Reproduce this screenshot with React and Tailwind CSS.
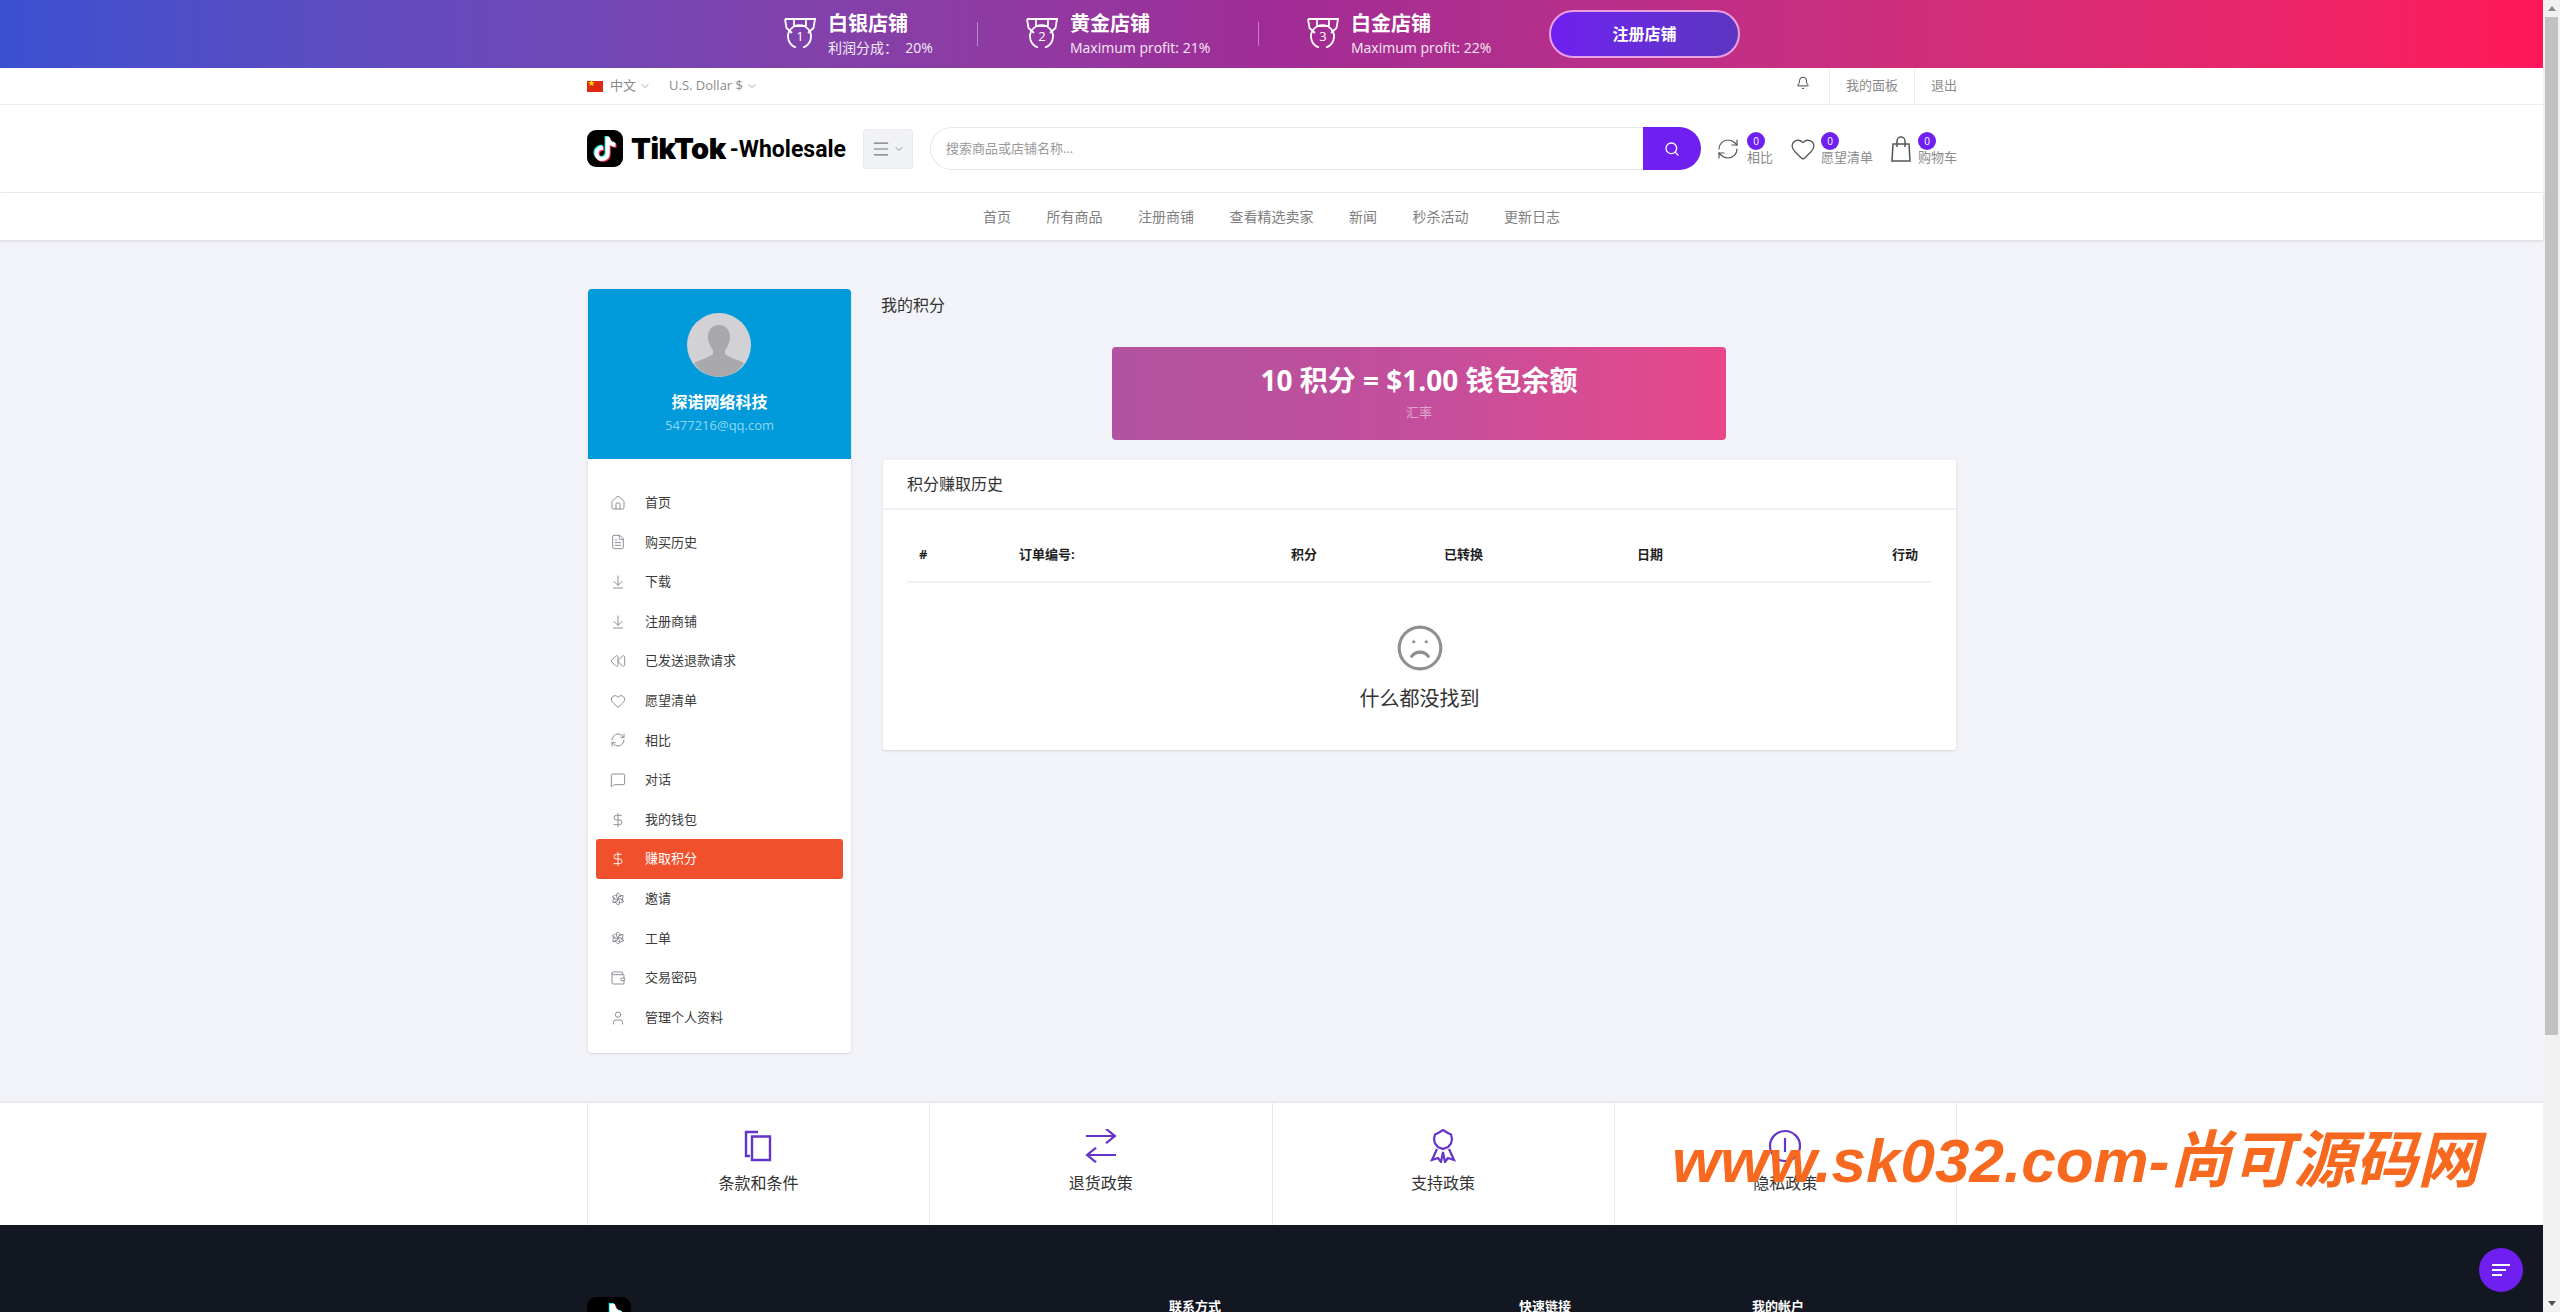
import { House, FileText, ArrowDownToLine, Rewind, Heart, RefreshCw, MessageSquare, DollarSign, Wallet, User, Bell, Search, Menu, ChevronDown, Frown } from 'lucide-react'
import { FaTiktok } from 'react-icons/fa6'

const FONT = 'font-["Open_Sans","Noto_Sans_CJK_SC",sans-serif]'

// ── Pinwheel icon (sidebar) ───────────────────────────────────────────────────
function Pinwheel({ className }) {
  return (
    <svg className={className} viewBox="0 0 24 24" fill="none" stroke="currentColor" strokeWidth={1.4}>
      {[0, 60, 120, 180, 240, 300].map((r) => (
        <path key={r} transform={`rotate(${r} 12 12)`} d="M12 12c-3-2-3-6-1-9 3 1 5 3 5 6" />
      ))}
    </svg>
  )
}

// ── Medal (top banner) ────────────────────────────────────────────────────────
function Medal({ n }) {
  return (
    <svg className="w-8 h-8 shrink-0" viewBox="0 0 32 32" fill="none" stroke="#fff" strokeWidth={1.8}>
      <path d="M1 1h30l-1.5 9-5.5 5M1 1l1.5 9 5.5 5M10 1v7M22 1v7M10 8h12" />
      <path d="M19 30.5a11.5 11.5 0 1 0-7 0" transform="translate(0 -1)" />
      <text x="16" y="23" textAnchor="middle" fontSize="13" fill="#fff" stroke="none" fontFamily="Open Sans">{n}</text>
    </svg>
  )
}

function Tier({ n, title, sub, subWidth }) {
  return (
    <div className="flex items-center gap-3 text-white">
      <Medal n={n} />
      <div className={subWidth}>
        <div className="text-[20px] leading-[26px] font-bold">{title}</div>
        <div className="text-[14px] leading-[20px] mt-[1px] text-white/90 whitespace-pre">{sub}</div>
      </div>
    </div>
  )
}

// ── TikTok logo ───────────────────────────────────────────────────────────────
function LogoMark({ size = 'w-9 h-[37px]', icon = 'text-[24px]' }) {
  return (
    <div className={`relative shrink-0 ${size} bg-black rounded-[9px] flex items-center justify-center ${icon}`}>
      <FaTiktok className="absolute text-[#25f4ee] -translate-x-[1px] -translate-y-[1px]" />
      <FaTiktok className="absolute text-[#fe2c55] translate-x-[1px] translate-y-[1px]" />
      <FaTiktok className="absolute text-white" />
    </div>
  )
}

function HeaderIcon({ icon, label, boxWidth }) {
  return (
    <div className="flex items-center whitespace-nowrap">
      <div className={`shrink-0 ${boxWidth}`}>{icon}</div>
      <div className="flex flex-col items-start">
        <span className="w-[18px] h-[18px] rounded-full bg-[#6f1ff0] text-white text-[10px] flex items-center justify-center">0</span>
        <span className="text-[13px] leading-[16px] text-[#8a8a8a] -mt-[1px]">{label}</span>
      </div>
    </div>
  )
}

const menu = [
  [House, '首页'],
  [FileText, '购买历史'],
  [ArrowDownToLine, '下载'],
  [ArrowDownToLine, '注册商铺'],
  [Rewind, '已发送退款请求'],
  [Heart, '愿望清单'],
  [RefreshCw, '相比'],
  [MessageSquare, '对话'],
  [DollarSign, '我的钱包'],
  [DollarSign, '赚取积分', true],
  [Pinwheel, '邀请'],
  [Pinwheel, '工单'],
  [Wallet, '交易密码'],
  [User, '管理个人资料'],
]

function Sidebar() {
  return (
    <aside className="w-[263px] shrink-0 rounded-[4px] bg-white shadow-sm overflow-hidden">
      <div className="h-[170px] bg-[#019bdb] flex flex-col items-center pt-[24px]">
        <svg className="w-16 h-16 rounded-full -ml-[2px]" viewBox="0 0 64 64">
          <rect width="64" height="64" fill="#d2d2d4" />
          <path d="M32 12c7 0 11 5 11 12 0 3-.5 5-1.500 7-1 3-2.500 5-3.500 6v4c3 3 11 5 19 9-5 8-14 14-25 14S12 58 7 50c8-4 16-6 19-9v-4c-1-1-2.500-3-3.500-6-1-2-1.500-4-1.500-7 0-7 4-12 11-12z" fill="#a9a9ac" />
        </svg>
        <div className="mt-[13px] text-[16px] leading-[24px] font-bold text-white">探诺网络科技</div>
        <div className="text-[13px] leading-[20px] mt-[1px] text-[#8fd6f3]">5477216@qq.com</div>
      </div>
      <div className="pt-[24px] pb-[16px] px-2">
        {menu.map(([Icon, label, active]) => (
          <div key={label} className={`h-[39.6px] flex items-center pl-[14px] rounded-[3px] text-[13px] ${active ? 'bg-[#f1502c] text-white' : 'text-[#3a3a3a]'}`}>
            <Icon className={`w-4 h-4 ${active ? 'text-white' : 'text-[#85858f]'}`} strokeWidth={1.4} />
            <span className="ml-[19px]">{label}</span>
          </div>
        ))}
      </div>
    </aside>
  )
}

function Content() {
  return (
    <section className="flex-1 ml-[32px] min-w-0">
      <h1 className="-ml-[2px] mt-[4px] text-[16px] leading-[24px] text-[#333]">我的积分</h1>
      <div className="mt-[30px] ml-[229px] w-[614px] h-[93px] rounded-[4px] bg-gradient-to-r from-[#b2539f] via-[#c34e9c] to-[#e8478a] flex flex-col items-center text-white">
        <div className="mt-[15px] text-[28px] leading-[36px] font-bold">10 积分 = $1.00 钱包余额</div>
        <div className="mt-[4px] text-[13px] leading-[20px] text-white/50">汇率</div>
      </div>
      <div className="mt-[20px] bg-white rounded-[2px] shadow-sm h-[290px]">
        <div className="h-[50px] border-b-2 border-[#eff0f4] px-6 flex items-center text-[16px] text-[#333]">积分赚取历史</div>
        <div className="px-6">
          <div className="h-[73px] pt-[18px] border-b-2 border-[#f1f1f5] grid grid-cols-[100px_272px_153px_193px_1fr_1fr] items-center pl-[12px] pr-[14px] text-[13px] font-bold text-[#1f1f1f]">
            <span>#</span>
            <span>订单编号:</span>
            <span>积分</span>
            <span>已转换</span>
            <span>日期</span>
            <span className="text-right">行动</span>
          </div>
          <div className="flex flex-col items-center pt-[40px]">
            <Frown className="w-[50px] h-[50px] text-[#8f8f8f]" strokeWidth={1.5} />
            <div className="mt-[12px] text-[20px] leading-[28px] text-[#333]">什么都没找到</div>
          </div>
        </div>
      </div>
    </section>
  )
}

function Policy({ icon, label, last }) {
  return (
    <div className={`flex-1 flex flex-col items-center pt-[26px] border-l border-[#e8e8ec] ${last ? 'border-r' : ''}`}>
      {icon}
      <div className="mt-[8px] text-[16px] leading-[24px] text-[#333]">{label}</div>
    </div>
  )
}

const policyIcon = 'w-[34px] h-[34px] text-[#6534c9]'

function Scrollbar() {
  return (
    <div className="w-[17px] shrink-0 bg-[#f1f1f1] flex flex-col items-center">
      <div className="h-[17px] flex items-center justify-center">
        <div className="w-0 h-0 border-x-[4px] border-x-transparent border-b-[5px] border-b-[#8a8a8a]" />
      </div>
      <div className="w-[13px] h-[1018px] bg-[#c1c1c1]" />
      <div className="mt-auto h-[17px] flex items-center justify-center">
        <div className="w-0 h-0 border-x-[4px] border-x-transparent border-t-[5px] border-t-[#505050]" />
      </div>
    </div>
  )
}

export default function App() {
  return (
    <div className={`h-[1312px] overflow-hidden flex ${FONT}`}>
      <div className="flex-1 min-w-0 relative flex flex-col bg-[#f2f3f8]">
        {/* tier banner */}
        <div className="h-[68px] shrink-0 bg-gradient-to-r from-[#3a50d0] via-[#a02c96] to-[#ff1659] flex items-center pl-[784px]">
          <Tier n="1" title="白银店铺" sub="利润分成：  20%" subWidth="w-[101px]" />
          <div className="w-px h-6 bg-white/40 mx-[48px]" />
          <Tier n="2" title="黄金店铺" sub="Maximum profit: 21%" subWidth="w-[140px]" />
          <div className="w-px h-6 bg-white/40 mx-[48px]" />
          <Tier n="3" title="白金店铺" sub="Maximum profit: 22%" subWidth="w-[140px]" />
          <div className="ml-[58px] w-[191px] h-[48px] rounded-full border-2 border-[#e8a0e0] bg-gradient-to-r from-[#6f1ff0] to-[#5c35c0] flex items-center justify-center text-white text-[16px] font-bold">注册店铺</div>
        </div>

        {/* top links */}
        <div className="h-[37px] shrink-0 bg-white border-b border-[#ededf0]">
          <div className="w-[1370px] ml-[587px] h-full flex items-center text-[13px] text-[#8a8a8a]">
            <div className="relative w-4 h-[11px] bg-[#de2910] mr-[7px]">
              <span className="absolute left-[1px] -top-[3px] text-[7px] text-[#ffde00]">★</span>
            </div>
            <span>中文</span>
            <ChevronDown className="w-3 h-3 ml-[3px]" strokeWidth={1.5} />
            <span className="ml-[18px]">U.S. Dollar $</span>
            <ChevronDown className="w-3 h-3 ml-[3px]" strokeWidth={1.5} />
            <Bell className="ml-auto w-[14px] h-[14px] text-[#333] -mt-[6px]" strokeWidth={1.6} />
            <div className="ml-[19px] h-full border-l border-[#ededf0] pl-[16px] flex items-center">我的面板</div>
            <div className="ml-[16px] h-full border-l border-[#ededf0] pl-[16px] flex items-center">退出</div>
          </div>
        </div>

        {/* search header */}
        <div className="h-[88px] shrink-0 bg-white border-b border-[#ededf0]">
          <div className="ml-[587px] w-[1370px] h-full flex items-center">
            <div className="w-[276px] shrink-0 flex items-center whitespace-nowrap">
              <LogoMark />
              <span className="ml-[8px] font-['Inter'] font-black text-[29px] tracking-[-0.5px] text-black">TikTok</span>
              <span className="ml-[4px] mt-[3px] font-['Roboto'] font-bold text-[23px] text-black">-Wholesale</span>
            </div>
            <div className="w-[50px] h-[40px] shrink-0 rounded-[3px] bg-[#f1f2f6] border border-[#e8e9ee] flex items-center justify-center text-[#777]">
              <Menu className="w-[20px] h-[20px]" strokeWidth={1.4} />
              <ChevronDown className="w-3 h-3 ml-[2px]" strokeWidth={1.5} />
            </div>
            <div className="ml-[17px] w-[771px] h-[43px] shrink-0 flex">
              <div className="flex-1 border border-r-0 border-[#e6e6eb] rounded-l-full pl-[15px] flex items-center text-[13px] text-[#999]">搜索商品或店铺名称...</div>
              <div className="w-[58px] bg-[#6f1ff0] rounded-r-full flex items-center justify-center">
                <Search className="w-[16px] h-[16px] text-white" strokeWidth={2} />
              </div>
            </div>
            <div className="ml-[15px]">
              <HeaderIcon boxWidth="w-[31px]" label="相比" icon={<RefreshCw className="w-[24px] h-[24px] text-[#555]" strokeWidth={1.2} />} />
            </div>
            <div className="ml-[17px]">
              <HeaderIcon boxWidth="w-[31px]" label="愿望清单" icon={<Heart className="w-[26px] h-[26px] text-[#555]" strokeWidth={1.2} />} />
            </div>
            <div className="ml-[17px]">
              <HeaderIcon boxWidth="w-[28px]" label="购物车" icon={
                <svg className="w-[22px] h-[26px] text-[#555]" viewBox="0 0 22 26" fill="none" stroke="currentColor" strokeWidth={1.5}>
                  <path d="M3 8h16l1 17H2z" />
                  <path d="M7 11V5a4 4 0 0 1 8 0v6" />
                </svg>
              } />
            </div>
          </div>
        </div>

        {/* nav */}
        <div className="h-[47px] shrink-0 bg-white shadow-[0_1px_3px_rgba(0,0,0,0.12)] flex items-center justify-center gap-[35.500px] text-[14px] text-[#808080] relative">
          {['首页', '所有商品', '注册商铺', '查看精选卖家', '新闻', '秒杀活动', '更新日志'].map((t) => (
            <span key={t}>{t}</span>
          ))}
        </div>

        {/* main */}
        <div className="h-[863px] shrink-0 pt-[49px] border-b-2 border-[#e9e9ee]">
          <div className="ml-[588px] w-[1368px] flex items-start">
            <Sidebar />
            <Content />
          </div>
        </div>

        {/* policy links */}
        <div className="h-[122px] shrink-0 bg-white">
          <div className="ml-[587px] w-[1370px] h-full flex">
            <Policy label="条款和条件" icon={
              <svg className={policyIcon} viewBox="0 0 34 34" fill="none" stroke="currentColor" strokeWidth={2.4}>
                <path d="M16 3H4v24h4" />
                <path d="M10 7.500h18V31H10z" />
              </svg>
            } />
            <Policy label="退货政策" icon={
              <svg className={policyIcon} viewBox="0 0 34 34" fill="none" stroke="currentColor" strokeWidth={2.4}>
                <path d="M2 10h29M22 1l9 9-9 9" transform="translate(0 -1) scale(1 .8)" />
                <path d="M32 25H3M12 16l-9 9 9 9" transform="translate(0 6) scale(1 .8)" />
              </svg>
            } />
            <Policy label="支持政策" icon={
              <svg className={policyIcon} viewBox="0 0 34 34" fill="none" stroke="currentColor" strokeWidth={2.2}>
                <path d="M17 1l4 2.500 4 2 1 4.500-1 4.500-3 3.500-5 2-5-2-3-3.500-1-4.500 1-4.500 4-2z" />
                <path d="M11 20L6 31l6-2 3 4 2-10 2 10 3-4 6 2-5-11" />
              </svg>
            } />
            <Policy last label="隐私政策" icon={
              <svg className={policyIcon} viewBox="0 0 34 34" fill="none" stroke="currentColor" strokeWidth={2.2}>
                <circle cx="17" cy="17" r="15" />
                <path d="M17 9v14" />
              </svg>
            } />
          </div>
        </div>

        {/* footer */}
        <div className="flex-1 bg-[#131722] relative">
          <div className="ml-[587px] w-[1370px] pt-[72px] flex">
            <LogoMark size="w-[44px] h-[44px]" icon="text-[30px]" />
            <div className="ml-[538px] text-[13px] font-bold text-white">联系方式</div>
            <div className="ml-[298px] text-[13px] font-bold text-white">快速链接</div>
            <div className="ml-[181px] text-[13px] font-bold text-white">我的帐户</div>
          </div>
        </div>

        {/* floating button */}
        <div className="absolute left-[2479px] top-[1248px] w-[44px] h-[44px] rounded-full bg-[#6f1ff0] flex items-center justify-center">
          <svg className="w-[22px] h-[14px]" viewBox="0 0 22 14" fill="none" stroke="#fff" strokeWidth={2}>
            <path d="M2 2h18M2 7h14M2 12h10" />
          </svg>
        </div>

        {/* watermark */}
        <div className="absolute left-[1672px] top-[1119px] italic font-bold text-[#f7691f] text-[62px] leading-[84px] whitespace-nowrap font-['Liberation_Sans','Noto_Sans_CJK_SC',sans-serif]">www.sk032.com-尚可源码网</div>
      </div>
      <Scrollbar />
    </div>
  )
}
